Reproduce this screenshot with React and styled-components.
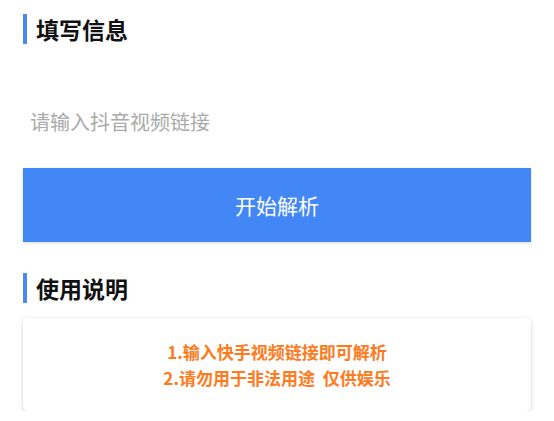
import React from 'react'
import styled, { createGlobalStyle } from 'styled-components'

const Global = createGlobalStyle`
  body {
    margin: 0;
    background: #fff;
    font-family: "Noto Sans CJK SC", "Noto Sans", sans-serif;
  }
`

const Page = styled.div`
  padding: 14px 23px 0 23px;
  display: flex;
  flex-direction: column;
`

const SectionTitle = styled.h2`
  margin: ${p => p.$top || 0}px 0 0 0;
  height: 30px;
  display: flex;
  align-items: center;
  border-left: 4px solid #4a8af4;
  padding-left: 9px;
  font-size: 23px;
  font-weight: 700;
  color: #111;
  line-height: 30px;
`

const Input = styled.input`
  margin-top: 53px;
  height: 48px;
  border: none;
  outline: none;
  padding: 0 7px;
  font-family: inherit;
  font-size: 20px;
  color: #333;
  background: transparent;

  &::placeholder {
    color: #aaa;
  }
`

const Button = styled.button`
  margin-top: 23px;
  height: 74px;
  border: none;
  background: #4387f6;
  color: #fff;
  font-family: inherit;
  font-size: 21px;
  box-shadow: 0 1px 3px rgba(0, 0, 0, 0.15);
  cursor: pointer;
`

const Card = styled.div`
  margin-top: 15px;
  height: 93px;
  border-radius: 5px;
  background: #fff;
  box-shadow: 0 1px 4px rgba(0, 0, 0, 0.18);
  display: flex;
  flex-direction: column;
  align-items: center;
  justify-content: center;
`

const Tip = styled.div`
  color: #ff7a1c;
  font-size: 17px;
  font-weight: 700;
  line-height: 26px;
`

export default function App() {
  return (
    <>
      <Global />
      <Page>
        <SectionTitle>填写信息</SectionTitle>
        <Input placeholder="请输入抖音视频链接" />
        <Button>开始解析</Button>
        <SectionTitle $top={31}>使用说明</SectionTitle>
        <Card>
          <Tip>1.输入快手视频链接即可解析</Tip>
          <Tip>2.请勿用于非法用途&nbsp;&nbsp;仅供娱乐</Tip>
        </Card>
      </Page>
    </>
  )
}
